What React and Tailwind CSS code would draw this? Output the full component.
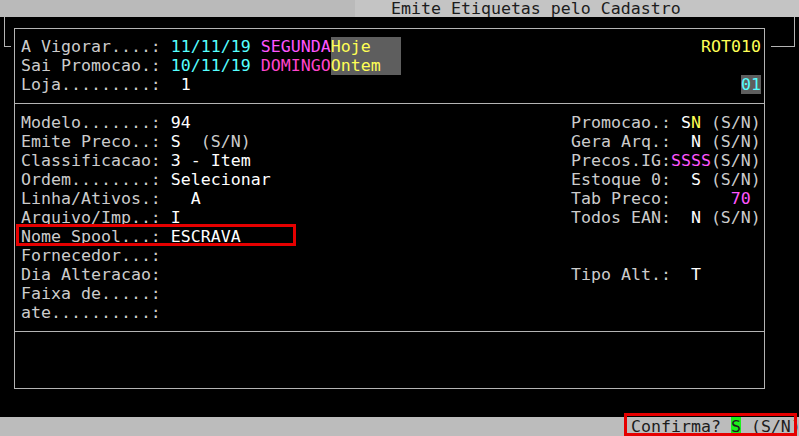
const LINE = "bg-[#b4b4b4]";

const Row = ({ children, className = "" }) => (
  <div className={`flex h-[19px] whitespace-pre pl-[6px] ${className}`}>{children}</div>
);

const Rule = () => (
  <div className="flex h-[19px] items-center">
    <div className={`h-px w-full ${LINE}`} />
  </div>
);

// two-column row: left form field at col 2, right field at col 57
const Pair = ({ left, right }) => (
  <Row>
    <span className="w-[550px] shrink-0">{left}</span>
    <span>{right}</span>
  </Row>
);

const V = ({ children }) => <span className="text-white">{children}</span>;

export default function App() {
  return (
    <div className="relative h-[436px] w-[799px] overflow-hidden bg-black font-['DejaVu_Sans_Mono',monospace] text-[16.6px] leading-[19px] text-[#cccccc]">
      {/* title bar */}
      <div className="flex h-[17px] text-[#1c1c1c]">
        <div className="w-[355px] bg-[#bababa]" />
        <div className="flex-1 whitespace-pre bg-[#c4c4c4] pl-[36px] leading-[17px]">
          Emite Etiquetas pelo Cadastro
        </div>
      </div>

      {/* screen area */}
      <div className="relative h-[400px] pt-[11px]">
        {/* window behind the form */}
        <div className="absolute left-[4px] top-0 h-[30px] w-[791px] border-x border-b border-[#b4b4b4]" />

        <div className="relative ml-[11px] w-[760px] bg-black pl-[3px] pr-[6px]">
          <div className="border border-[#b4b4b4] pb-[9px] pt-[8px]">
            <Row className="justify-between pr-[3px]">
              <span>
                {"A Vigorar....: "}
                <span className="text-[#55ffff]">11/11/19</span>
                {" "}
                <span className="text-[#ff55ff]">SEGUNDA</span>
                <span className="inline-block h-[19px] bg-[#5e5e5e] text-[#ffff55]">{"Hoje   "}</span>
              </span>
              <span className="text-[#ffff55]">ROT010</span>
            </Row>
            <Row>
              <span>
                {"Sai Promocao.: "}
                <span className="text-[#55ffff]">10/11/19</span>
                {" "}
                <span className="text-[#ff44cc]">DOMINGO</span>
                <span className="inline-block h-[19px] bg-[#5e5e5e] text-[#ffff55]">{"Ontem  "}</span>
              </span>
            </Row>
            <Row className="justify-between pr-[3px]">
              <span>
                {"Loja.........:  "}
                <V>1</V>
              </span>
              <span className="inline-block h-[19px] bg-[#5e5e5e] text-[#55ffff]">01</span>
            </Row>

            <Rule />

            <Pair
              left={<>{"Modelo.......: "}<V>94</V></>}
              right={<>{"Promocao.: "}<V>S</V><span className="text-[#ffff55]">N</span>{" (S/N)"}</>}
            />
            <Pair
              left={<>{"Emite Preco..: "}<V>S</V>{"  (S/N)"}</>}
              right={<>{"Gera Arq.:  "}<V>N</V>{" (S/N)"}</>}
            />
            <Pair
              left={<>{"Classificacao: "}<V>3 - Item</V></>}
              right={<>{"Precos.IG:"}<span className="text-[#ff55ff]">SSSS</span>{"(S/N)"}</>}
            />
            <Pair
              left={<>{"Ordem........: "}<V>Selecionar</V></>}
              right={<>{"Estoque 0:  "}<V>S</V>{" (S/N)"}</>}
            />
            <Pair
              left={<>{"Linha/Ativos.:   "}<V>A</V></>}
              right={<>{"Tab Preco:      "}<span className="text-[#ff55ff]">70</span></>}
            />
            <Pair
              left={<>{"Arquivo/Imp..: "}<V>I</V></>}
              right={<>{"Todos EAN:  "}<V>N</V>{" (S/N)"}</>}
            />
            <Row className="relative">
              <span>
                {"Nome Spool...: "}
                <V>ESCRAVA</V>
              </span>
              {/* highlight box */}
              <div className="absolute -top-[3px] left-[1px] h-[22px] w-[280px] border-[3px] border-[#e60000]" />
            </Row>
            <Row>{"Fornecedor...:"}</Row>
            <Pair left={"Dia Alteracao:"} right={<>{"Tipo Alt.:  "}<V>T</V></>} />
            <Row>{"Faixa de.....:"}</Row>
            <Row>{"ate..........:"}</Row>

            <Rule />

            <div className="h-[38px]" />
          </div>
        </div>
      </div>

      {/* status line */}
      <div className="relative h-[19px] whitespace-pre bg-[#bcbcbc] pl-[631px] text-[#1c1c1c]">
        {"Confirma? "}
        <span className="inline-block h-[19px] bg-[#1cf01c]">S</span>
        {" (S/N)"}
        <div className="absolute -top-[4px] left-[624px] h-[23px] w-[173px] border-[3px] border-[#e60000]" />
      </div>
    </div>
  );
}
